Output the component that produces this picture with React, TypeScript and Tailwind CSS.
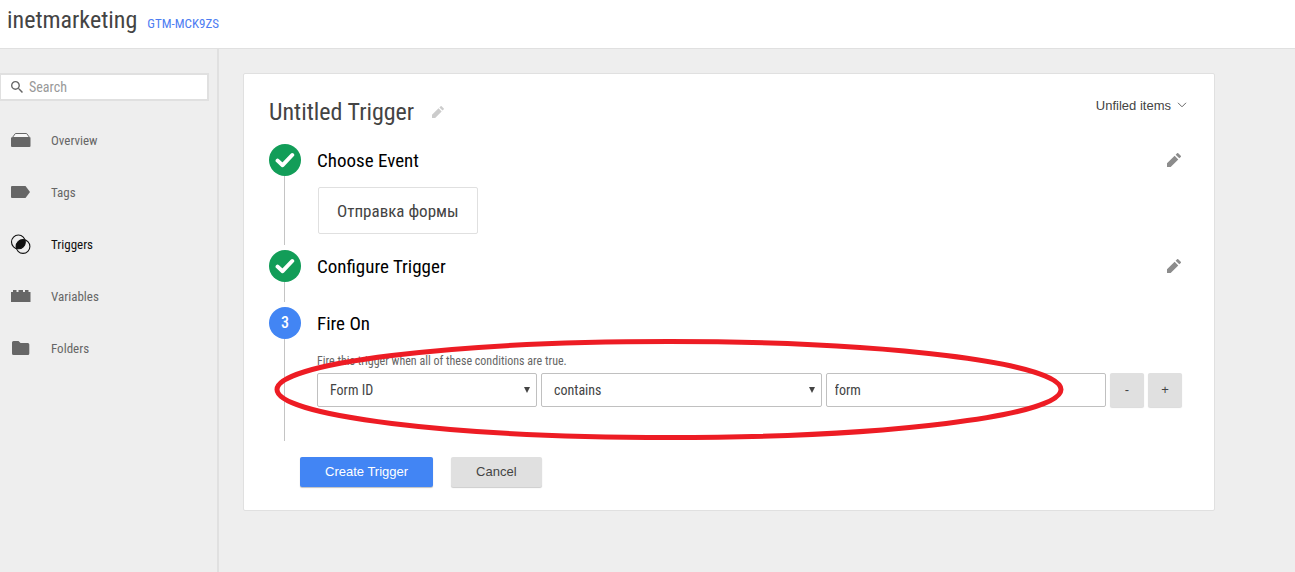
import type { ReactNode } from "react";

const condensed = "font-['Roboto_Condensed','Roboto','Liberation_Sans_Narrow',sans-serif]";
const sans = "font-['Liberation_Sans',Arial,sans-serif]";

function PencilIcon({ className }: { className: string }) {
  return (
    <svg viewBox="3 3 18 18" className={className} fill="currentColor" aria-hidden="true">
      <path d="M3 16.3V21h4.7L17.5 11.2l-4.7-4.7L3 16.3zM20.7 8a1 1 0 0 0 0-1.4l-3.3-3.3a1 1 0 0 0-1.4 0l-1.9 1.9 4.7 4.7L20.7 8z" />
    </svg>
  );
}

const navItems: { label: string; active?: boolean; icon: ReactNode }[] = [
  {
    label: "Overview",
    icon: (
      <>
        <path d="M4.4 2.5h11.2l3 4H1.4z" fill="#f7f7f7" stroke="#666" strokeWidth="1" />
        <path d="M0 6.5h19.5V15a1 1 0 0 1-1 1H1a1 1 0 0 1-1-1z" />
      </>
    ),
  },
  { label: "Tags", icon: <path d="M1 3h13.5l4.5 6-4.5 6H1a1 1 0 0 1-1-1V4a1 1 0 0 1 1-1z" /> },
  {
    label: "Triggers",
    active: true,
    icon: (
      <>
        <circle cx="7.4" cy="6.9" r="6.9" fill="none" stroke="currentColor" strokeWidth="1.1" />
        <circle cx="12" cy="11.5" r="6.9" fill="none" stroke="currentColor" strokeWidth="1.1" />
        <path d="M14 4.9A6.9 6.9 0 0 1 5.4 13.5A6.9 6.9 0 0 1 14 4.9z" />
      </>
    ),
  },
  {
    label: "Variables",
    icon: <path d="M0 5h2V3h3.5v2h2V3H12v2h2V3h3.5v2h2v10H0z" />,
  },
  {
    label: "Folders",
    icon: <path d="M2.5 2h5l2 2h7.3a1.5 1.5 0 0 1 1.5 1.5v9a1.5 1.5 0 0 1-1.5 1.5H2.5A1.5 1.5 0 0 1 1 14.5v-11A1.5 1.5 0 0 1 2.5 2z" />,
  },
];

function Badge({ number }: { number?: number }) {
  if (number) {
    return (
      <span className="flex size-8 items-center justify-center rounded-full bg-[#4285f4] text-base font-medium text-white">
        {number}
      </span>
    );
  }
  return (
    <span className="flex size-8 items-center justify-center rounded-full bg-[#129d58]">
      <svg viewBox="0 0 20 16" className="h-4 w-5" fill="none" stroke="#fff" strokeWidth="4" strokeLinecap="round" strokeLinejoin="round" aria-hidden="true">
        <path d="M2.6 8.6l5 4.6L17.2 3" />
      </svg>
    </span>
  );
}

function Step({ title, number, editable, children }: { title: string; number?: number; editable?: boolean; children?: ReactNode }) {
  return (
    <li className="flex gap-4">
      <div className="flex flex-col items-center">
        <Badge number={number} />
        <span className="mr-px w-px flex-1 bg-[#c4c4c4]" />
      </div>
      <div className="min-w-0 flex-1">
        <div className="flex h-8 items-center justify-between">
          <h2 className="pt-0.5 text-[19px] text-black">{title}</h2>
          {editable && (
            <button type="button" aria-label={`Edit ${title}`} className="pr-px text-[#8c8c8c]">
              <PencilIcon className="size-[14px]" />
            </button>
          )}
        </div>
        {children}
      </div>
    </li>
  );
}

function Select({ label, value, className }: { label: string; value: string; className: string }) {
  return (
    <div className={`relative ${className}`}>
      <select aria-label={label} className="h-[34px] w-full appearance-none rounded-xs border border-[#c0c0c0] bg-white px-3 text-sm text-[#444]">
        <option>{value}</option>
      </select>
      <svg viewBox="0 0 6 6" className="pointer-events-none absolute top-[14px] right-[7px] size-[6px]" fill="#444" aria-hidden="true">
        <path d="M0 0h6L3 6z" />
      </svg>
    </div>
  );
}

export default function App() {
  return (
    <div className={`flex min-h-screen flex-col bg-[#eee] text-[#444] ${condensed}`}>
      <header className="flex h-[49px] items-baseline gap-[10px] border-b border-[#e0e0e0] bg-white px-[7px] pt-1">
        <h1 className="text-2xl">inetmarketing</h1>
        <a href="#container" className="text-[13px] text-[#4d7df2]">GTM-MCK9ZS</a>
      </header>

      <div className="flex flex-1">
        <aside className="w-[219px] shrink-0 border-r-2 border-[#e0e0e0] pt-6 pr-2">
          <label className="flex h-7 items-center gap-[6px] border-2 border-l border-[#e0e0e0] bg-white pl-[10px]">
            <svg viewBox="3 3 17.5 17.5" className="size-3 shrink-0" fill="#666" aria-hidden="true">
              <path d="M15.5 14h-.79l-.28-.27A6.47 6.47 0 0 0 16 9.5 6.5 6.5 0 1 0 9.5 16c1.61 0 3.09-.59 4.23-1.57l.27.28v.79l5 4.99L20.49 19l-4.99-5zm-6 0C7.01 14 5 11.99 5 9.5S7.01 5 9.5 5 14 7.01 14 9.5 11.99 14 9.5 14z" />
            </svg>
            <input type="search" aria-label="Search" placeholder="Search" className="w-full min-w-0 text-sm outline-none placeholder:text-[#999]" />
          </label>
          <nav className="mt-[14px]">
            {navItems.map((item) => (
              <a
                key={item.label}
                href={`#${item.label.toLowerCase()}`}
                className={`flex h-[52px] items-center gap-5 pl-[11px] text-[13px] ${item.active ? "text-[#111]" : "text-[#666]"}`}
              >
                <svg viewBox="0 0 20 20" className="size-5 overflow-visible" fill="currentColor" aria-hidden="true">
                  {item.icon}
                </svg>
                {item.label}
              </a>
            ))}
          </nav>
        </aside>

        <main className="min-w-0 flex-1 pt-6 pr-20 pb-6 pl-6">
          <section className="rounded-xs border border-[#e0e0e0] bg-white pt-[22px] pr-8 pb-[23px] pl-[25px]">
            <div className="flex items-start justify-between">
              <div className="flex items-center gap-[18px]">
                <h1 className="text-2xl">Untitled Trigger</h1>
                <button type="button" aria-label="Rename trigger" className="text-[#ccc]">
                  <PencilIcon className="size-3" />
                </button>
              </div>
              <button type="button" className={`-mr-[5px] flex items-center gap-[6px] text-[13px] ${sans}`}>
                Unfiled items
                <svg viewBox="0 0 10 8" className="h-2 w-[10px]" fill="none" stroke="#666" strokeWidth="1" aria-hidden="true">
                  <path d="M1 .8l4 4 4-4" />
                </svg>
              </button>
            </div>

            <ol className="mt-4 flex flex-col gap-[5px]">
              <Step title="Choose Event" editable>
                <div className="my-[11px] ml-px inline-flex h-[47px] items-center rounded-xs border border-[#e0e0e0] px-[18px] pt-0.5 align-top text-[17px]">
                  Отправка формы
                </div>
              </Step>
              <Step title="Configure Trigger" editable>
                <div className="h-5" />
              </Step>
              <Step title="Fire On" number={3}>
                <p className="mt-[14px] text-xs leading-4 text-[#666]">Fire this trigger when all of these conditions are true.</p>
                <div className="relative mt-1 flex gap-1 pb-[34px]">
                  <Select label="Variable" value="Form ID" className="w-[220px] shrink-0" />
                  <Select label="Operator" value="contains" className="min-w-0 flex-1" />
                  <div className="min-w-0 flex-1">
                    <input aria-label="Value" defaultValue="form" className="h-[34px] w-full rounded-xs border border-[#c0c0c0] px-2 text-sm outline-none" />
                  </div>
                  {["-", "+"].map((sign) => (
                    <button
                      key={sign}
                      type="button"
                      aria-label={sign === "-" ? "Remove condition" : "Add condition"}
                      className={`size-[34px] shrink-0 rounded-xs bg-[#e0e0e0] text-[13px] shadow-[0_1px_1px_rgba(0,0,0,0.15)] ${sans}`}
                    >
                      {sign}
                    </button>
                  ))}
                  <svg viewBox="0 0 788 100" className="pointer-events-none absolute -top-[34px] -left-[42px] h-[100px] w-[788px] overflow-visible" fill="none" stroke="#ed1c24" strokeWidth="5" aria-hidden="true">
                    <ellipse cx="394" cy="50.5" rx="392" ry="48" />
                  </svg>
                </div>
              </Step>
            </ol>

            <div className={`mt-4 ml-[31px] flex gap-[18px] text-[13px] ${sans}`}>
              <button type="button" className="h-[30px] rounded-xs bg-[#4285f4] px-[25px] text-white shadow-[0_1px_1px_rgba(0,0,0,0.25)]">Create Trigger</button>
              <button type="button" className="h-[30px] rounded-xs bg-[#e0e0e0] px-[25px] shadow-[0_1px_1px_rgba(0,0,0,0.2)]">Cancel</button>
            </div>
          </section>
        </main>
      </div>
    </div>
  );
}
